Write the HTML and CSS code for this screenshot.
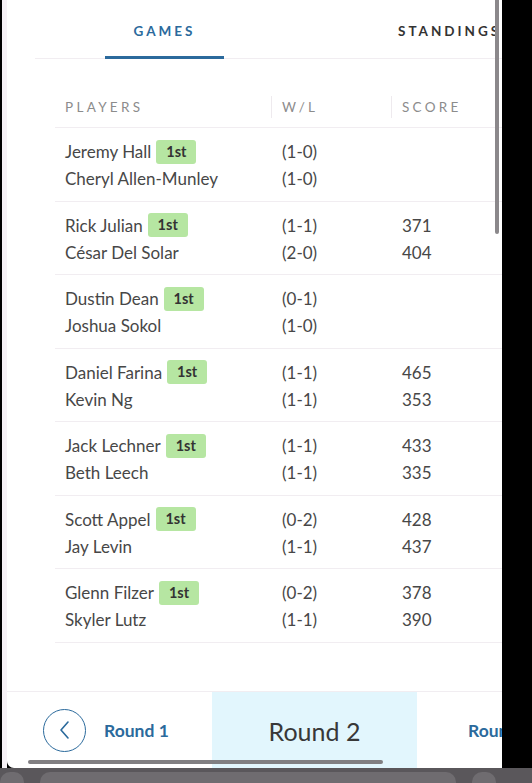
FILE: index.html
```html
<!DOCTYPE html>
<html>
<head>
<meta charset="utf-8">
<link rel="stylesheet" href="styles.css">
</head>
<body>
<div class="screen">
  <div class="edge"></div>
  <div class="card">
    <nav class="tabs">
      <div class="tab active">GAMES</div>
      <div class="tab">STANDINGS</div>
    </nav>
    <div class="table">
      <div class="thead">
        <div class="th">PLAYERS</div>
        <div class="th sep">W/L</div>
        <div class="th sep">SCORE</div>
      </div>
      <div class="row">
        <div class="cell"><div class="line">Jeremy Hall <span class="badge">1st</span></div><div class="line">Cheryl Allen-Munley</div></div>
        <div class="cell num"><div class="line">(1-0)</div><div class="line">(1-0)</div></div>
        <div class="cell num"><div class="line"></div><div class="line"></div></div>
      </div>
      <div class="row">
        <div class="cell"><div class="line">Rick Julian <span class="badge">1st</span></div><div class="line">César Del Solar</div></div>
        <div class="cell num"><div class="line">(1-1)</div><div class="line">(2-0)</div></div>
        <div class="cell num"><div class="line">371</div><div class="line">404</div></div>
      </div>
      <div class="row">
        <div class="cell"><div class="line">Dustin Dean <span class="badge">1st</span></div><div class="line">Joshua Sokol</div></div>
        <div class="cell num"><div class="line">(0-1)</div><div class="line">(1-0)</div></div>
        <div class="cell num"><div class="line"></div><div class="line"></div></div>
      </div>
      <div class="row">
        <div class="cell"><div class="line">Daniel Farina <span class="badge">1st</span></div><div class="line">Kevin Ng</div></div>
        <div class="cell num"><div class="line">(1-1)</div><div class="line">(1-1)</div></div>
        <div class="cell num"><div class="line">465</div><div class="line">353</div></div>
      </div>
      <div class="row">
        <div class="cell"><div class="line">Jack Lechner <span class="badge">1st</span></div><div class="line">Beth Leech</div></div>
        <div class="cell num"><div class="line">(1-1)</div><div class="line">(1-1)</div></div>
        <div class="cell num"><div class="line">433</div><div class="line">335</div></div>
      </div>
      <div class="row">
        <div class="cell"><div class="line">Scott Appel <span class="badge">1st</span></div><div class="line">Jay Levin</div></div>
        <div class="cell num"><div class="line">(0-2)</div><div class="line">(1-1)</div></div>
        <div class="cell num"><div class="line">428</div><div class="line">437</div></div>
      </div>
      <div class="row">
        <div class="cell"><div class="line">Glenn Filzer <span class="badge">1st</span></div><div class="line">Skyler Lutz</div></div>
        <div class="cell num"><div class="line">(0-2)</div><div class="line">(1-1)</div></div>
        <div class="cell num"><div class="line">378</div><div class="line">390</div></div>
      </div>
    </div>
    <div class="spacer"></div>
    <footer class="rounds">
      <div class="prev">
        <span class="circle">
          <svg width="14" height="20" viewBox="0 0 14 20"><path d="M10 2 L3 10 L10 18" fill="none" stroke="#2b6a9c" stroke-width="1.6" stroke-linecap="round" stroke-linejoin="round"/></svg>
        </span>
        <span class="round-link">Round 1</span>
      </div>
      <div class="current">Round 2</div>
      <div class="next"><span class="round-link">Round 3</span></div>
    </footer>
    <div class="hscroll"></div>
    <div class="vscroll"></div>
  </div>
  <div class="right"></div>
</div>
<div class="dock">
  <div class="pill small"></div>
  <div class="pill wide"></div>
  <div class="pill small"></div>
</div>
</body>
</html>
```
FILE: styles.css
```css
* { box-sizing: border-box; }
html, body { margin: 0; padding: 0; }
body {
  width: 532px;
  height: 783px;
  overflow: hidden;
  background: #5a575b;
  font-family: Lato, "Open Sans", sans-serif;
  color: #474747;
}
.screen {
  display: flex;
  height: 768px;
  background: #000;
}
.edge {
  width: 7px;
  flex-shrink: 0;
  border-left: 2px solid #000;
  background: #f6f1f6;
}
.card {
  position: relative;
  width: 495px;
  flex-shrink: 0;
  background: #fff;
  display: flex;
  flex-direction: column;
  overflow: hidden;
  border-bottom-left-radius: 7px;
}
.right { flex: 1; background: #000; }

.tabs {
  display: flex;
  height: 59px;
  margin-left: 28px;
  padding-left: 70px;
  border-bottom: 1px solid #f1edf1;
  white-space: nowrap;
}
.tab {
  flex-shrink: 0;
  font-size: 13.5px;
  letter-spacing: 3px;
  font-weight: 700;
  color: #333;
  line-height: 62px;
}
.tab.active {
  width: 119px;
  text-align: center;
  color: #2b6a9c;
  border-bottom: 3px solid #2b6a9c;
  margin-bottom: -1px;
}
.tab + .tab { margin-left: 174px; }

.table { margin-left: 48px; }
.thead, .row {
  display: grid;
  grid-template-columns: 216px 120px 111px;
}
.thead {
  padding-top: 37px;
  padding-bottom: 9px;
  border-bottom: 1px solid #f1edf1;
}
.th {
  font-size: 13.5px;
  letter-spacing: 3.3px;
  color: #8c8c8c;
  padding-left: 10px;
  height: 22px;
  line-height: 22px;
}
.th.sep { border-left: 1px solid #eeeaee; }
.row {
  padding-top: 10px;
  padding-bottom: 8.5px;
  border-bottom: 1px solid #f1edf1;
}
.cell { padding-left: 10px; }
.num { padding-left: 11px; }
.line {
  height: 27px;
  line-height: 27px;
  font-size: 17px;
  white-space: nowrap;
  display: flex;
  align-items: center;
}
.badge {
  display: inline-block;
  margin-left: 5px;
  width: 40px;
  height: 24px;
  line-height: 24px;
  text-align: center;
  background: #b6e6a2;
  border-radius: 3px;
  font-size: 14.5px;
  font-weight: 700;
  color: #333;
}
.spacer {
  flex: 1;
  border-bottom: 1px solid #f1edf1;
}
.rounds {
  display: flex;
  height: 76px;
  align-items: stretch;
  white-space: nowrap;
}
.prev {
  width: 205px;
  flex-shrink: 0;
  display: flex;
  align-items: center;
  padding-left: 36px;
}
.circle {
  width: 43px;
  height: 43px;
  border: 1.5px solid #2b6a9c;
  border-radius: 50%;
  display: flex;
  align-items: center;
  justify-content: center;
  margin-right: 18px;
}
.round-link {
  font-size: 17.5px;
  font-weight: 700;
  color: #2b6a9c;
}
.current {
  width: 205px;
  flex-shrink: 0;
  background: #e2f6fd;
  display: flex;
  align-items: center;
  justify-content: center;
  font-size: 25px;
  color: #383838;
  padding-top: 2px;
}
.next {
  flex-shrink: 0;
  display: flex;
  align-items: center;
  padding-left: 51px;
}
.hscroll {
  position: absolute;
  left: 21px;
  bottom: 4px;
  width: 355px;
  height: 4px;
  border-radius: 2px;
  background: #7a787b;
  opacity: 0.95;
}
.vscroll {
  position: absolute;
  left: 488px;
  top: 0;
  width: 4px;
  height: 234px;
  border-radius: 0 0 2px 2px;
  background: #8b888b;
}
.dock {
  display: flex;
  gap: 16px;
  height: 15px;
  padding-top: 4px;
}
.pill {
  background: #6f6c70;
  border-radius: 10px 10px 0 0;
}
.pill.small { width: 24px; }
.pill.small:first-child { margin-left: 0; }
.pill.wide { width: 416px; }
```
